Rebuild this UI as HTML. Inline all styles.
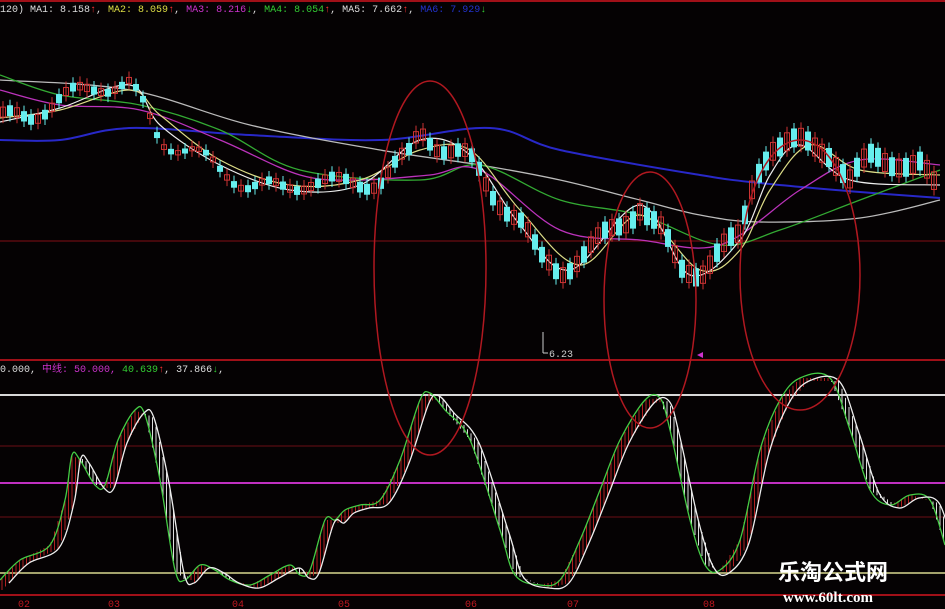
<!DOCTYPE html>
<html><head><meta charset="utf-8"><style>
html,body{margin:0;padding:0;background:#050203;width:945px;height:609px;overflow:hidden}
svg{display:block}
.t{font-family:"Liberation Mono","Noto Sans CJK SC",monospace;font-size:10px}
</style></head><body>
<svg id="s" width="945" height="609" xmlns="http://www.w3.org/2000/svg">
<rect width="945" height="609" fill="#050203"/>
<line x1="0" y1="1" x2="945" y2="1" stroke="#a01018" stroke-width="2"/>
<line x1="0" y1="241" x2="945" y2="241" stroke="#5a0a10" stroke-width="1.5"/>
<line x1="0" y1="360" x2="945" y2="360" stroke="#a01018" stroke-width="2"/>
<line x1="0" y1="395" x2="945" y2="395" stroke="#d8d8d8" stroke-width="2"/>
<line x1="0" y1="446" x2="945" y2="446" stroke="#4a0a10" stroke-width="1.5"/>
<line x1="0" y1="483" x2="945" y2="483" stroke="#c030c0" stroke-width="2"/>
<line x1="0" y1="517" x2="945" y2="517" stroke="#4a0a10" stroke-width="1.5"/>
<line x1="0" y1="573" x2="945" y2="573" stroke="#d8d890" stroke-width="1.5"/>
<line x1="0" y1="595" x2="945" y2="595" stroke="#a01018" stroke-width="2"/>
<g id="g"></g>
<ellipse cx="430" cy="268" rx="56" ry="187" fill="none" stroke="#b01820" stroke-width="1.5"/>
<ellipse cx="650" cy="300" rx="46" ry="128" fill="none" stroke="#b01820" stroke-width="1.5"/>
<ellipse cx="800" cy="275" rx="60" ry="135" fill="none" stroke="#b01820" stroke-width="1.5"/>
<text class="t" x="0" y="12" fill="#ddd">120) MA1: 8.158<tspan fill="#f33">↑</tspan>, <tspan fill="#dd4">MA2: 8.059</tspan><tspan fill="#f33">↑</tspan>, <tspan fill="#c3c">MA3: 8.216</tspan><tspan fill="#3c3">↓</tspan>, <tspan fill="#3c3">MA4: 8.054</tspan><tspan fill="#f33">↑</tspan>, MA5: 7.662<tspan fill="#f33">↑</tspan>, <tspan fill="#23c">MA6: 7.929</tspan><tspan fill="#3c3">↓</tspan></text>
<text class="t" x="0" y="372" fill="#ddd">0.000, <tspan fill="#c3c">中线: 50.000,</tspan> <tspan fill="#3c3">40.639</tspan><tspan fill="#f33">↑</tspan>, 37.866<tspan fill="#3c3">↓</tspan>,</text>
<path d="M543 332V353M543 353h5" stroke="#ccc" fill="none"/>
<text class="t" x="549" y="357" fill="#ccc">6.23</text>
<path d="M697 355l6-3v6z" fill="#c3c"/>
<g class="t" fill="#c01820" font-size="11">
<text x="18" y="607">02</text><text x="108" y="607">03</text><text x="232" y="607">04</text><text x="338" y="607">05</text><text x="465" y="607">06</text><text x="567" y="607">07</text><text x="703" y="607">08</text></g>
<text x="778" y="580" fill="#fff" font-family="'Noto Sans CJK SC',sans-serif" font-weight="bold" font-size="22">乐淘公式网</text>
<text x="783" y="602" fill="#fff" font-family="'Liberation Serif',serif" font-weight="bold" font-size="15">www.60lt.com</text>
</svg>
<script>
var g=document.getElementById('g'),NS='http://www.w3.org/2000/svg';
function el(n,a){var e=document.createElementNS(NS,n);for(var k in a)e.setAttribute(k,a[k]);g.appendChild(e);return e}
function interp(P,x){for(var i=1;i<P.length;i++)if(x<=P[i][0]){var a=P[i-1],b=P[i];return a[1]+(b[1]-a[1])*(x-a[0])/(b[0]-a[0])}return P[P.length-1][1]}
function smooth(P){var d='M'+P[0][0]+','+P[0][1];for(var i=0;i<P.length-1;i++){var p0=P[i-1]||P[i],p1=P[i],p2=P[i+1],p3=P[i+2]||p2;
d+=' C'+(p1[0]+(p2[0]-p0[0])/6)+','+(p1[1]+(p2[1]-p0[1])/6)+' '+(p2[0]-(p3[0]-p1[0])/6)+','+(p2[1]-(p3[1]-p1[1])/6)+' '+p2[0]+','+p2[1];}return d}
function pl(P,c,w){el('path',{d:smooth(P),fill:'none',stroke:c,'stroke-width':w||1.3})}
pl([[0,140],[60,140],[130,128],[250,135],[380,140],[490,128],[560,150],[700,175],[760,183],[860,192],[940,198]],'#2828c8',2);
pl([[0,80],[130,90],[250,125],[380,150],[480,165],[560,180],[640,200],[700,215],[760,222],[860,218],[940,200]],'#bbb',1.3);
pl([[0,75],[60,95],[140,105],[220,130],[300,170],[420,180],[480,165],[560,200],[640,215],[720,245],[780,230],[860,200],[940,170]],'#3a3',1.3);
pl([[0,90],[60,105],[140,110],[220,140],[300,175],[360,180],[430,175],[480,170],[560,230],[640,240],[720,245],[800,190],[860,160],[940,165]],'#b3b',1.3);
pl([[0,118],[60,110],[130,90],[160,115],[220,160],[290,185],[360,180],[420,150],[470,150],[520,210],[580,265],[640,215],[700,270],[740,250],[770,190],[810,145],[860,170],[940,175]],'#dd8',1.2);
pl([[0,122],[60,108],[130,85],[160,125],[220,165],[290,190],[360,185],[420,140],[470,155],[520,225],[570,270],[640,205],[690,275],[740,240],[770,175],[800,145],[850,180],[940,185]],'#eee',1.2);
var C=[[0,120],[30,115],[60,100],[100,85],[130,85],[145,110],[160,140],[190,150],[220,170],[250,185],[280,190],[310,180],[340,185],[380,180],[410,155],[420,130],[440,145],[470,160],[490,190],[520,220],[540,260],[560,270],[590,250],[620,225],[640,205],[660,230],[680,270],[700,270],[720,250],[740,240],[755,175],[770,145],[800,145],[830,150],[850,180],[870,160],[900,160],[920,165],[935,190]];
for(var x=3;x<940;x+=7){var y=interp(C,x)+(Math.sin(x*1.7)*8);var h=4+Math.abs(Math.sin(x*0.9))*14;var up=Math.sin(x*2.3+1)>0;
el('line',{x1:x,y1:y-h/2-6,x2:x,y2:y+h/2+6,stroke:up?'#c33':'#6ee'});
el('rect',{x:x-2.5,y:y-h/2,width:5,height:h,fill:up?'none':'#6ee',stroke:up?'#c33':'#6ee'});}
var O=[[0,580],[20,560],[50,545],[65,500],[72,455],[80,460],[95,485],[105,485],[118,440],[135,410],[145,415],[160,480],[175,570],[185,580],[200,565],[215,570],[230,580],[250,585],[270,575],[290,565],[300,575],[310,570],[325,520],[335,520],[345,510],[360,505],[380,500],[400,460],[420,400],[430,393],[445,410],[470,440],[500,530],[515,575],[540,585],[560,580],[580,540],[600,490],[620,440],[645,400],[660,398],[670,430],[690,520],[705,565],[720,570],[740,540],[760,450],[780,400],[800,378],[830,378],[850,430],[870,490],[890,505],[910,495],[930,500],[945,545]];
var W=O.map(p=>[p[0]+9,p[1]+3]);
for(var x=2;x<945;x+=3.5){var a=interp(O,x),b=interp(W,x);el('line',{x1:x,y1:a,x2:x,y2:b,stroke:a<b?'#b02020':'#ddd','stroke-width':1});}
pl(O,'#4c4',1.3);pl(W,'#eee',1.3);
</script>
</body></html>
